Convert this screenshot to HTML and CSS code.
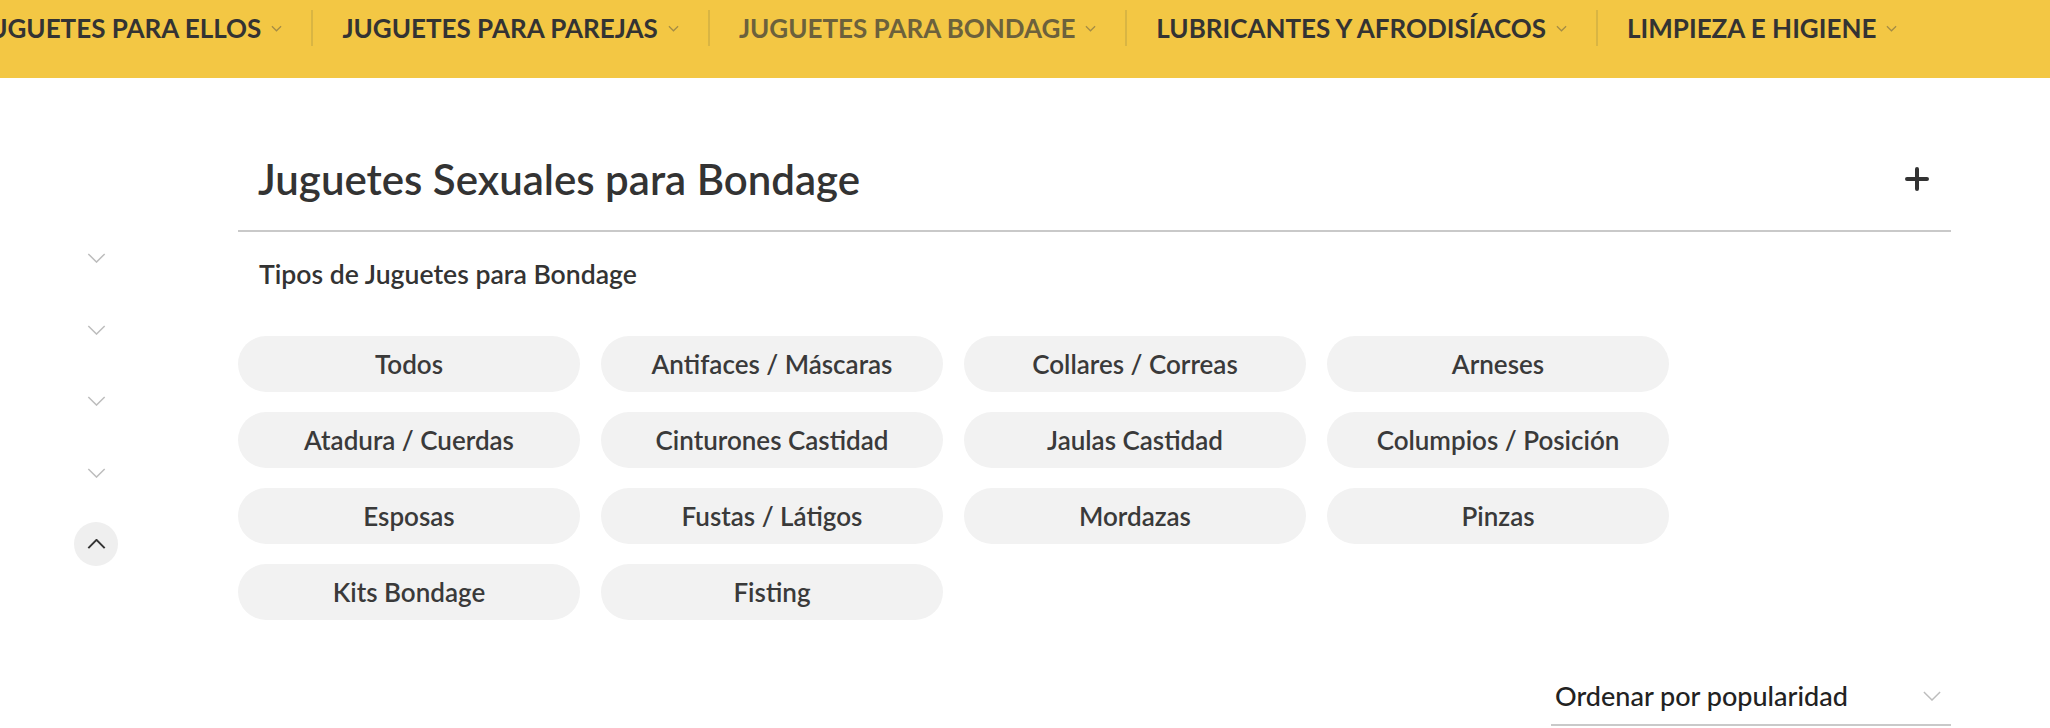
FILE: index.html
```html
<!DOCTYPE html>
<html lang="es">
<head>
<meta charset="utf-8">
<title>Juguetes Sexuales para Bondage</title>
<link rel="stylesheet" href="styles.css">
</head>
<body>
<header class="topbar">
  <nav class="menu">
    <a class="menu-item" href="#"><span>JUGUETES PARA ELLOS</span><svg class="menu-chev" viewBox="0 0 12 7"><path d="M1 1l5 5 5-5"/></svg></a>
    <a class="menu-item" href="#"><span>JUGUETES PARA PAREJAS</span><svg class="menu-chev" viewBox="0 0 12 7"><path d="M1 1l5 5 5-5"/></svg></a>
    <a class="menu-item is-active" href="#"><span>JUGUETES PARA BONDAGE</span><svg class="menu-chev" viewBox="0 0 12 7"><path d="M1 1l5 5 5-5"/></svg></a>
    <a class="menu-item" href="#"><span>LUBRICANTES Y AFRODISÍACOS</span><svg class="menu-chev" viewBox="0 0 12 7"><path d="M1 1l5 5 5-5"/></svg></a>
    <a class="menu-item" href="#"><span>LIMPIEZA E HIGIENE</span><svg class="menu-chev" viewBox="0 0 12 7"><path d="M1 1l5 5 5-5"/></svg></a>
  </nav>
</header>

<div class="page">
  <aside class="side">
    <button class="side-btn"><svg viewBox="0 0 20 11"><path d="M1 1l9 9 9-9"/></svg></button>
    <button class="side-btn"><svg viewBox="0 0 20 11"><path d="M1 1l9 9 9-9"/></svg></button>
    <button class="side-btn"><svg viewBox="0 0 20 11"><path d="M1 1l9 9 9-9"/></svg></button>
    <button class="side-btn"><svg viewBox="0 0 20 11"><path d="M1 1l9 9 9-9"/></svg></button>
    <button class="side-btn side-btn-up"><svg viewBox="0 0 20 11"><path d="M1 10l9-9 9 9"/></svg></button>
  </aside>

  <main class="content">
    <div class="title-row">
      <h1 class="title">Juguetes Sexuales para Bondage</h1>
      <svg class="plus" viewBox="0 0 24 24"><path d="M12 2v20M2 12h20"/></svg>
    </div>

    <h2 class="subtitle">Tipos de Juguetes para Bondage</h2>

    <div class="pills">
      <a class="pill" href="#">Todos</a>
      <a class="pill" href="#">Antifaces / Máscaras</a>
      <a class="pill" href="#">Collares / Correas</a>
      <a class="pill" href="#">Arneses</a>
      <a class="pill" href="#">Atadura / Cuerdas</a>
      <a class="pill" href="#">Cinturones Castidad</a>
      <a class="pill" href="#">Jaulas Castidad</a>
      <a class="pill" href="#">Columpios / Posición</a>
      <a class="pill" href="#">Esposas</a>
      <a class="pill" href="#">Fustas / Látigos</a>
      <a class="pill" href="#">Mordazas</a>
      <a class="pill" href="#">Pinzas</a>
      <a class="pill" href="#">Kits Bondage</a>
      <a class="pill" href="#">Fisting</a>
    </div>

    <div class="sort-row">
      <div class="sort">
        <span>Ordenar por popularidad</span>
        <svg class="sort-chev" viewBox="0 0 20 11"><path d="M1 1l9 9 9-9"/></svg>
      </div>
    </div>
  </main>
</div>
</body>
</html>
```
FILE: styles.css
```css
* { box-sizing: border-box; }

html, body {
  margin: 0;
  padding: 0;
  background: #ffffff;
  overflow: hidden;
}

body {
  font-family: Lato, "Open Sans", sans-serif;
  color: #333333;
  width: 2050px;
  height: 728px;
}

/* ---------- top navigation ---------- */
.topbar {
  height: 78px;
  background: #f3c744;
  padding-top: 10px;
  overflow: hidden;
}

.menu {
  display: flex;
  align-items: center;
  margin-left: -52px;
  white-space: nowrap;
}

.menu-item {
  display: flex;
  align-items: center;
  height: 36px;
  padding: 0 29px 0 29px;
  border-left: 2px solid #d9b543;
  color: #333333;
  text-decoration: none;
  font-weight: 700;
  font-size: 26px;
  letter-spacing: 0;
}
.menu-item:first-child { border-left: none; }

.menu-item.is-active { color: #6c613c; }

.menu-chev {
  width: 11px;
  height: 7px;
  margin-left: 10px;
  fill: none;
  stroke: #a48c45;
  stroke-width: 1.3;
}

/* ---------- page layout ---------- */
.page {
  display: flex;
  height: 650px;
}

.side {
  width: 238px;
  flex: none;
  display: flex;
  flex-direction: column;
  gap: 27.5px;
  padding: 158px 0 0 74px;
}

.side-btn {
  width: 44px;
  height: 44px;
  border: none;
  padding: 0;
  background: transparent;
  border-radius: 50%;
  display: flex;
  align-items: center;
  justify-content: center;
}
.side-btn svg {
  width: 19px;
  height: 10px;
  fill: none;
  stroke: #bdbdbd;
  stroke-width: 1.6;
}
.side-btn-up { background: #efefef; }
.side-btn-up svg { stroke: #333333; stroke-width: 2.2; }

.content {
  width: 1713px;
  flex: none;
  padding-top: 76px;
}

.title-row {
  display: flex;
  align-items: center;
  justify-content: space-between;
  padding: 0 22px 26px 20px;
  border-bottom: 2px solid #c9c9c9;
}

.title {
  margin: 0;
  font-size: 42px;
  line-height: 50px;
  font-weight: 600;
  color: #333333;
  letter-spacing: 0;
}

.plus {
  width: 24px;
  height: 24px;
  fill: none;
  stroke: #333333;
  stroke-width: 4;
  stroke-linecap: round;
}

.subtitle {
  margin: 27px 0 0 0;
  padding-left: 21px;
  font-size: 26.6px;
  line-height: 30px;
  font-weight: 600;
  color: #333333;
}

.pills {
  display: grid;
  grid-template-columns: repeat(4, 342px);
  column-gap: 21px;
  row-gap: 20px;
  margin-top: 47px;
}

.pill {
  height: 56px;
  border-radius: 28px;
  background: #f2f2f2;
  color: #3a3a3a;
  text-decoration: none;
  font-size: 26px;
  line-height: 56px;
  font-weight: 600;
  text-align: center;
}

.sort-row {
  display: flex;
  justify-content: flex-end;
  margin-top: 58px;
}

.sort {
  width: 400px;
  display: flex;
  align-items: center;
  justify-content: space-between;
  height: 48px;
  padding: 0 10px 10px 4px;
  border-bottom: 2px solid #c9c9c9;
  font-size: 27px;
  line-height: 36px;
  font-weight: 500;
  color: #222222;
}

.sort-chev {
  width: 18px;
  height: 10px;
  fill: none;
  stroke: #bdbdbd;
  stroke-width: 1.6;
}
```
